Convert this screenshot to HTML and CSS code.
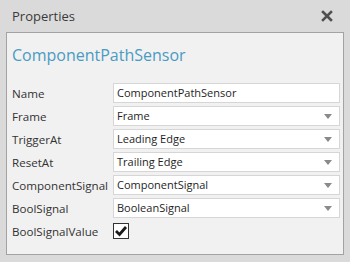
FILE: index.html
```html
<!DOCTYPE html>
<html>
<head>
    <link rel="stylesheet" href="styles.css">
</head>
<body>
    <div class="titlebar">
        <span class="title">Properties</span>
        <svg class="close" width="12" height="12" viewBox="0 0 12 12">
            <path d="M2 2 L10 10 M10 2 L2 10" stroke="#505050" stroke-width="2.6" stroke-linecap="square"/>
        </svg>
    </div>
    <div class="panel">
        <div class="heading">ComponentPathSensor</div>
        <div class="props">
            <div class="label">Name</div>
            <div class="field">ComponentPathSensor</div>

            <div class="label">Frame</div>
            <div class="field select">Frame<span class="arrow"></span></div>

            <div class="label">TriggerAt</div>
            <div class="field select">Leading Edge<span class="arrow"></span></div>

            <div class="label">ResetAt</div>
            <div class="field select">Trailing Edge<span class="arrow"></span></div>

            <div class="label">ComponentSignal</div>
            <div class="field select">ComponentSignal<span class="arrow"></span></div>

            <div class="label">BoolSignal</div>
            <div class="field select">BooleanSignal<span class="arrow"></span></div>

            <div class="label">BoolSignalValue</div>
            <div class="checkrow">
                <span class="check">
                    <svg width="14" height="14" viewBox="0 0 14 14">
                        <path d="M2 7 L5.5 10.5 L12 3" fill="none" stroke="#1a1a1a" stroke-width="2.8"/>
                    </svg>
                </span>
            </div>
        </div>
    </div>
</body>
</html>
```

FILE: styles.css
```css
body {
    margin: 0;
    background-color: #dadada;
    font-family: "Open Sans", "Noto Sans", sans-serif;
    color: #333333;
    width: 350px;
    height: 262px;
    overflow: hidden;
}
.titlebar {
    height: 32px;
    display: flex;
    align-items: center;
    justify-content: space-between;
    padding: 0 17px 0 12px;
}
.title {
    font-size: 13px;
    color: #3a3a3a;
}
.close {
    display: block;
}
.panel {
    margin: 0 6px;
    height: 221px;
    background-color: #f1f1f1;
    border: 1px solid #a3a3a3;
    padding: 0 3px 0 5px;
}
.heading {
    font-size: 16px;
    color: #4a9bc2;
    margin-top: 11px;
    height: 23px;
    line-height: 23px;
    margin-bottom: 16px;
}
.props {
    display: grid;
    grid-template-columns: 101px 1fr;
    grid-auto-rows: 20px;
    row-gap: 3px;
    align-items: center;
}
.label {
    font-size: 11.6px;
    color: #333333;
}
.field {
    height: 18px;
    line-height: 18px;
    background-color: #ffffff;
    border: 1px solid #d6d6d6;
    padding-left: 3px;
    font-size: 11px;
    color: #1e1e1e;
    display: flex;
    justify-content: space-between;
    align-items: center;
}
.arrow {
    width: 0;
    height: 0;
    border-left: 4px solid transparent;
    border-right: 4px solid transparent;
    border-top: 5px solid #8a8a8a;
    margin-right: 7px;
}
.check {
    width: 14px;
    height: 14px;
    border: 1px solid #333333;
    background-color: #ffffff;
    display: flex;
    align-items: center;
    justify-content: center;
}
.checkrow {
    display: flex;
    align-items: center;
}
```
